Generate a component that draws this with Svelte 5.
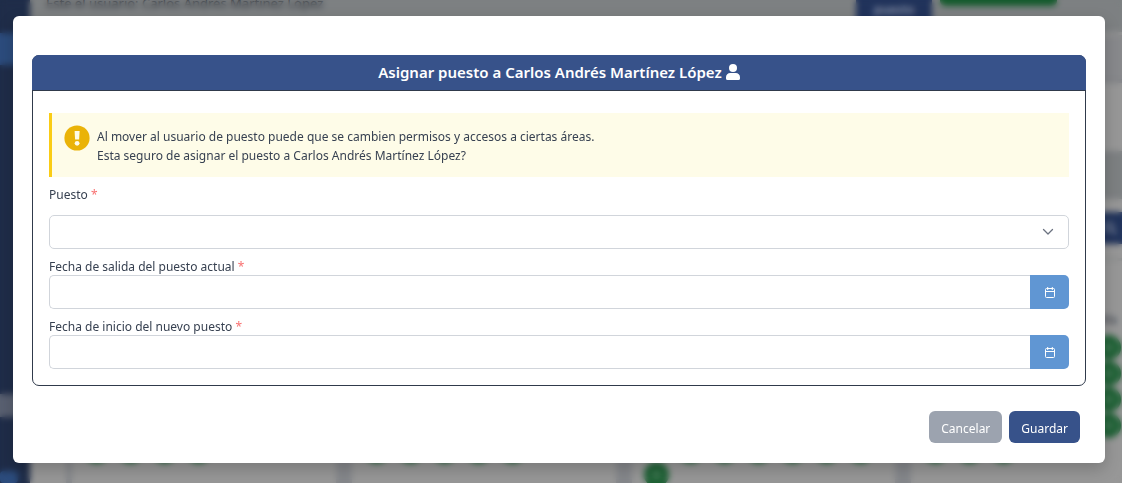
<script>
  const persona = 'Carlos Andrés Martínez López';
  const cards = [4, 5, 7, 3];
  let puesto = $state('');
  let salida = $state('');
  let inicio = $state('');
</script>

{#snippet calendar()}
  <svg width="10" height="11" viewBox="0 0 10 11" fill="none" stroke="currentColor" aria-hidden="true">
    <rect x="0.5" y="1.5" width="9" height="9" rx="1" />
    <path d="M1 4.5h8M2.7 0v3M7.3 0v3" />
  </svg>
{/snippet}

<div class="page" aria-hidden="true">
  <aside class="side">
    <span class="active"></span>
    <span class="chip"></span>
    <span class="active low"></span>
  </aside>
  <div class="content">
    <div class="top">
      <span class="user">Este el usuario: {persona}</span>
      <span class="job">puesto</span>
      <span class="go"></span>
    </div>
    <div class="tabs"></div>
    <div class="blank"></div>
    <div class="band"></div>
    <div class="search">
      <svg width="14" height="14" viewBox="0 0 14 14" fill="none" stroke="currentColor" stroke-width="2"><circle cx="6" cy="6" r="4" /><path d="M9 9l4 4" /></svg>
    </div>
    <div class="views">
      <b>Vis</b>
      {#each Array(4) as _}<i class="dot"></i>{/each}
    </div>
    <div class="cards">
      {#each cards as count, c}
        <div class="card">
          {#each Array(count) as _, n}<i class="dot" class:low={c === 2 && n === 0}></i>{/each}
        </div>
      {/each}
    </div>
  </div>
</div>

<div class="overlay">
  <div class="modal" role="dialog" aria-modal="true" aria-labelledby="titulo">
    <section class="panel">
      <h1 id="titulo">
        Asignar puesto a {persona}
        <svg width="14" height="16" viewBox="0 0 14 16" fill="currentColor" aria-hidden="true">
          <circle cx="7" cy="4" r="4" />
          <path d="M4.200 9h5.600A4.200 4.200 0 0 1 14 13.200v1.300a1.500 1.500 0 0 1-1.500 1.500h-11A1.500 1.500 0 0 1 0 14.500v-1.300A4.200 4.200 0 0 1 4.200 9z" />
        </svg>
      </h1>
      <div class="body">
        <div class="alert">
          <svg width="26" height="26" viewBox="0 0 26 26" aria-hidden="true">
            <circle cx="13" cy="13" r="12.600" fill="#eab308" />
            <path d="M10.600 6h5l-.5 8.600h-4z" fill="#fefce8" />
            <circle cx="13.100" cy="18.300" r="2.400" fill="#fefce8" />
          </svg>
          <p>
            Al mover al usuario de puesto puede que se cambien permisos y accesos a ciertas áreas.<br />
            Esta seguro de asignar el puesto a {persona}?
          </p>
        </div>

        <div class="field spaced">
          <label for="puesto">Puesto <span>*</span></label>
          <div class="select">
            <select id="puesto" bind:value={puesto}><option value=""></option></select>
            <svg width="12" height="12" viewBox="0 0 12 12" fill="none" stroke="#6b7280" stroke-width="1.300" stroke-linecap="round" stroke-linejoin="round" aria-hidden="true"><path d="M1.500 3.500L6 8l4.500-4.500" /></svg>
          </div>
        </div>

        <div class="field">
          <label for="salida">Fecha de salida del puesto actual <span>*</span></label>
          <div class="date">
            <input id="salida" type="text" bind:value={salida} />
            <button type="button" aria-label="Elegir fecha de salida">{@render calendar()}</button>
          </div>
        </div>

        <div class="field">
          <label for="inicio">Fecha de inicio del nuevo puesto <span>*</span></label>
          <div class="date">
            <input id="inicio" type="text" bind:value={inicio} />
            <button type="button" aria-label="Elegir fecha de inicio">{@render calendar()}</button>
          </div>
        </div>
      </div>
    </section>
    <footer>
      <button type="button" class="cancel">Cancelar</button>
      <button type="button" class="save">Guardar</button>
    </footer>
  </div>
</div>

<style>
  :global(body) { background: #979797; }
  *, *::before { box-sizing: border-box; }
  .page, .overlay { font-family: "Segoe UI", "Noto Sans", sans-serif; font-size: 12px; }
  .page {
    position: fixed;
    inset: 0;
    display: flex;
    overflow: hidden;
    background: #979797;
    color: #4b5057;
  }
  .side { flex: 0 0 30px; display: flex; flex-direction: column; background: #1f2d49; padding-top: 33px; }
  .active { height: 32px; background: #2c4c7d; }
  .chip { height: 24px; margin: 329px 8px 0 0; background: #596071; }
  .active.low { height: 12px; margin: 54px 12px 0 0; border-radius: 4px; }
  .content { flex: 1; display: flex; flex-direction: column; min-width: 0; }
  .top { flex: 0 0 32px; display: flex; align-items: flex-start; gap: 8px; padding: 0 65px 0 16px; background: #7d8082; }
  .user { flex: 1; line-height: 16px; margin-top: -5px; color: #2c3139; font-size: 13px; }
  .job { width: 76px; height: 28px; padding-top: 1px; background: #21335b; color: #8f98ab; text-align: center; font-weight: 600; }
  .go { width: 117px; height: 6px; background: #145a2c; border-radius: 0 0 5px 5px; }
  .tabs { flex: 0 0 48px; margin-top: 3px; background: #88898c; border-bottom: 4px solid #818387; }
  .blank { flex: 0 0 68px; }
  .band { flex: 0 0 48px; background: #7d8082; }
  .search { flex: 0 0 32px; align-self: flex-end; width: 24px; margin-top: 13px; padding: 9px 5px; background: #21335b; color: #7f899d; }
  .search svg { display: block; }
  .views { flex: 0 0 190px; align-self: flex-end; width: 28px; margin-top: 14px; padding-top: 49px; border-top: 3px solid #8c8d8e; display: flex; flex-direction: column; align-items: center; gap: 1px; }
  .views b { line-height: 20px; margin-bottom: 4px; }
  .dot { flex: none; width: 25px; height: 25px; border: 8px solid #1d6134; border-radius: 50%; background: #3d7550; }
  .cards { flex: 1; display: grid; grid-template-columns: repeat(4, 1fr); gap: 16px; margin: -10px -53px 0 36px; padding-left: 6px; background: #85878b; }
  .card { display: flex; align-items: flex-start; gap: 9px; padding-left: 12px; background: #979797; }
  .dot.low { margin-top: 24px; }

  .overlay { position: fixed; inset: 0; overflow: auto; padding: 16px 17px 20px 13px; color: #374151; backdrop-filter: blur(3px); }
  .modal { padding: 39px 19px 20px; background: #fff; border-radius: 6px; box-shadow: 0 6px 16px rgba(0, 0, 0, 0.2); }
  .panel { border: 1px solid #303a4b; border-radius: 7px; }
  h1 { display: flex; align-items: center; justify-content: center; gap: 4px; margin: -1px -1px 0; height: 36px; padding-bottom: 1px; background: #37528a; border-bottom: 1px solid #303a4b; border-radius: 7px 7px 0 0; color: #fff; font-size: 15px; font-weight: 600; line-height: 24px; }
  .body { display: flex; flex-direction: column; gap: 9px; padding: 22px 16px 16px; }
  .alert { display: flex; gap: 7px; min-height: 64px; padding: 12px; background: #fefce8; border-left: 3px solid #facc15; }
  .alert svg { flex: none; }
  p { margin: 2px 0 0; line-height: 19px; }
  .field { display: flex; flex-direction: column; }
  label { line-height: 17px; }
  label span { color: #f87171; }
  .spaced { gap: 12px; }
  .select { display: grid; align-items: center; }
  .select > * { grid-area: 1 / 1; }
  .select svg { justify-self: end; margin-right: 15px; pointer-events: none; }
  select, input { width: 100%; height: 34px; padding: 0 12px; border: 1px solid #d1d5db; border-radius: 5px; background: #fff; color: inherit; font: inherit; }
  select { appearance: none; }
  .date { display: flex; }
  .date input { flex: 1; min-width: 0; border-radius: 5px 0 0 5px; border-right: 0; }
  .date button { display: grid; place-items: center; width: 39px; height: 34px; padding: 0; border: 0; border-radius: 0 5px 5px 0; background: #6096d3; color: #fff; }
  footer { display: flex; justify-content: flex-end; gap: 7px; margin-top: 25px; padding-right: 6px; }
  footer button { height: 32px; padding: 2px 12px 0; border: 0; border-radius: 6px; color: #fff; font: inherit; }
  .cancel { background: #9ca3af; }
  .save { background: #37528a; }
</style>
